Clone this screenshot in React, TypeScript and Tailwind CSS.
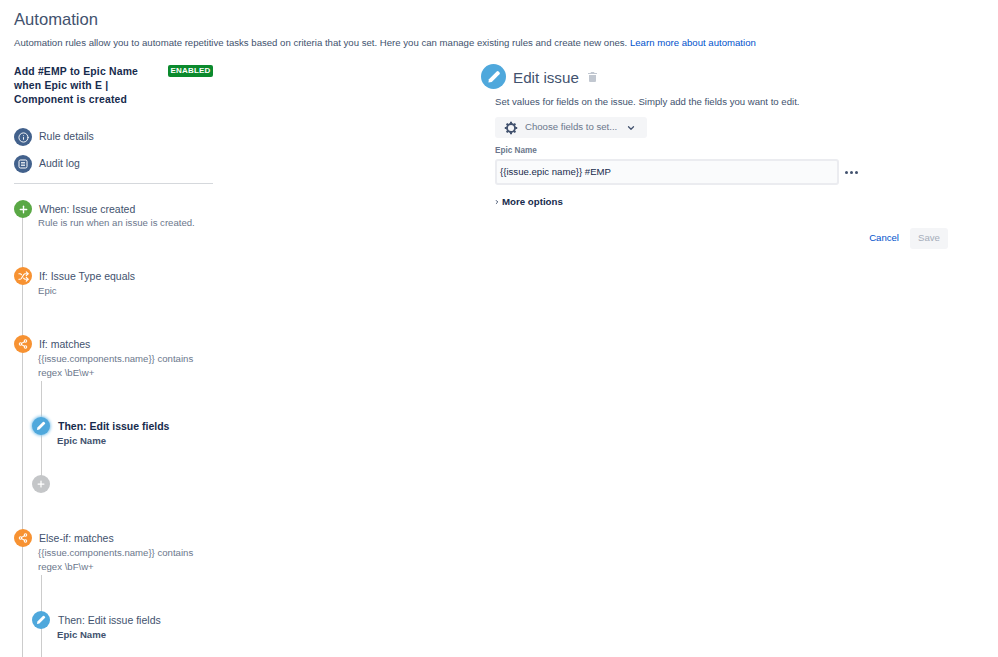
import React from 'react';
import { ChevronDown, ChevronRight, Info, Plus, Share2, Shuffle } from 'lucide-react';

const Pencil = ({ size = 10 }: { size?: number }) => (
  <svg width={size} height={size} viewBox="0 0 10 10" fill="white">
    <path d="M6.9 1.1a1 1 0 0 1 1.4 0l.6.6a1 1 0 0 1 0 1.4L3.4 8.6 1 9l.4-2.4z" />
  </svg>
);

const LogIcon = () => (
  <svg width="10" height="10" viewBox="0 0 10 10" fill="none" stroke="white" strokeWidth="1">
    <rect x="1" y="1" width="8" height="8" rx="1.5" />
    <path d="M3 3.5h4M3 5h4M3 6.5h4" strokeWidth="0.8" />
  </svg>
);

const Gear = () => (
  <svg width="14" height="14" viewBox="0 0 14 14" fill="none" stroke="#42526e">
    <circle cx="7" cy="7" r="4" strokeWidth="1.8" />
    <path d="M7 .8v2M7 11.2v2M.8 7h2M11.2 7h2M2.6 2.6L4 4M10 10l1.4 1.4M11.4 2.6L10 4M4 10l-1.4 1.4" strokeWidth="2" />
  </svg>
);

const Dot = ({ color, size = 'w-[18px] h-[18px]', children }: { color: string; size?: string; children: React.ReactNode }) => (
  <div className={`${size} ${color} relative rounded-full flex items-center justify-center shrink-0`}>
    {children}
  </div>
);

const Title = ({ children, strong }: { children: React.ReactNode; strong?: boolean }) => (
  <p className={`text-[10.5px] leading-[14px] ${strong ? 'font-bold text-[#172b4d]' : 'text-[#42526e]'}`}>{children}</p>
);

const Sub = ({ children, strong }: { children: React.ReactNode; strong?: boolean }) => (
  <p className={`text-[9.6px] leading-[14px] -ml-px ${strong ? 'font-bold text-[#42526e]' : 'text-[#6b778c]'}`}>{children}</p>
);

const MenuRow = ({ icon, label }: { icon: React.ReactNode; label: string }) => (
  <div className="flex items-center gap-[7px] h-[18px]">
    <Dot color="bg-[#42618c]">{icon}</Dot>
    <span className="text-[10.5px] text-[#42526e]">{label}</span>
  </div>
);

const Step = ({ icon, title, lines, className }: { icon: React.ReactNode; title: string; lines: string[]; className: string }) => (
  <div className={`flex gap-[7px] ${className}`}>
    <Dot color="bg-[#f79232]">{icon}</Dot>
    <div className="pt-[2px]">
      <Title>{title}</Title>
      <div className="mt-px">
        {lines.map((l) => <Sub key={l}>{l}</Sub>)}
      </div>
    </div>
  </div>
);

const ThenStep = ({ strong, className }: { strong?: boolean; className: string }) => (
  <div className={`flex gap-[8px] ml-[18px] ${className}`}>
    <Dot color={strong ? 'bg-[#4fa8dc] shadow-[0_0_3px_1px_#8cc8ec]' : 'bg-[#4fa8dc]'}><Pencil /></Dot>
    <div className="pt-[2px]">
      <Title strong={strong}>Then: Edit issue fields</Title>
      <div className="mt-px">
        <Sub strong>Epic Name</Sub>
      </div>
    </div>
  </div>
);

export default function App() {
  return (
    <div className="h-[657px] w-[998px] overflow-hidden bg-white font-['Liberation_Sans',sans-serif]">
      <div className="px-[14px] pt-[11px]">
        <h1 className="text-[16.6px] leading-[18px] text-[#42526e]">Automation</h1>
        <p className="mt-[7px] text-[9.6px] leading-[14px] text-[#42526e]">
          Automation rules allow you to automate repetitive tasks based on criteria that you set. Here you can manage existing rules and create new ones.{' '}
          <span className="text-[#0052cc]">Learn more about automation</span>
        </p>
      </div>

      <div className="flex mt-[15px] pl-[14px]">
        <aside className="w-[199px] shrink-0">
          <div className="flex justify-between items-start">
            <h2 className="text-[10.4px] leading-[14px] font-bold text-[#172b4d] tracking-[0.2px]">
              Add #EMP to Epic Name
              <br />
              when Epic with E |
              <br />
              Component is created
            </h2>
            <span className="h-[12px] w-[45px] text-center rounded-[2px] bg-[#0b8a2d] text-white text-[8px] leading-[12px] font-bold tracking-[0.2px]">ENABLED</span>
          </div>

          <div className="mt-[21px] flex flex-col gap-[9px]">
            <MenuRow icon={<Info size={11} color="white" />} label="Rule details" />
            <MenuRow icon={<LogIcon />} label="Audit log" />
          </div>
          <div className="mt-[10px] border-t border-[#d5d8dc]" />

          <div className="relative mt-[16px]">
            <span className="absolute left-[8px] top-[8px] w-px h-[450px] bg-[#cccccc]" />
            <span className="absolute left-[27px] top-[181px] w-px h-[102px] bg-[#cccccc]" />
            <span className="absolute left-[27px] top-[375px] w-px h-[90px] bg-[#cccccc]" />

            <div className="flex gap-[7px] h-[67px]">
              <Dot color="bg-[#5aa845]"><Plus size={11} color="white" strokeWidth={3} /></Dot>
              <div className="pt-[2px]">
                <Title>When: Issue created</Title>
                <Sub>Rule is run when an issue is created.</Sub>
              </div>
            </div>

            <Step
              className="h-[68px]"
              icon={<Shuffle size={11} color="white" strokeWidth={2.5} />}
              title="If: Issue Type equals"
              lines={['Epic']}
            />
            <Step
              className="h-[82px]"
              icon={<Share2 size={10} color="white" strokeWidth={2.5} />}
              title="If: matches"
              lines={['{{issue.components.name}} contains', 'regex \\bE\\w+']}
            />
            <ThenStep strong className="h-[58px]" />
            <div className="ml-[18px] h-[54px]">
              <Dot color="bg-[#c4c6c8]"><Plus size={10} color="white" strokeWidth={3} /></Dot>
            </div>
            <Step
              className="h-[82px]"
              icon={<Share2 size={10} color="white" strokeWidth={2.5} />}
              title="Else-if: matches"
              lines={['{{issue.components.name}} contains', 'regex \\bF\\w+']}
            />
            <ThenStep className="h-[40px]" />
          </div>
        </aside>

        <main className="ml-[268px] flex-1">
          <div className="flex items-center gap-[7px] h-[25px] -mt-px">
            <Dot color="bg-[#4fa8dc]" size="w-[25px] h-[25px]"><Pencil size={14} /></Dot>
            <span className="text-[15.2px] leading-[20px] pt-[2px] text-[#42526e]">Edit issue</span>
            <svg width="9" height="10" viewBox="0 0 9 10" fill="#c1c7d0" className="ml-[2px]">
              <path d="M3 0h3l.5 1H9v1H0V1h2.5zM1 3h7v6a1 1 0 0 1-1 1H2a1 1 0 0 1-1-1z" />
            </svg>
          </div>

          <div className="ml-[14px] w-[453px]">
            <p className="mt-[6px] text-[9.6px] leading-[14px] text-[#42526e]">
              Set values for fields on the issue. Simply add the fields you want to edit.
            </p>
            <div className="mt-[8px] flex items-center w-[152px] h-[21px] rounded-[3px] bg-[#f4f5f7] pl-[9px]">
              <Gear />
              <span className="ml-[7px] text-[9.6px] text-[#6b778c]">Choose fields to set...</span>
              <ChevronDown size={10} color="#42526e" strokeWidth={3} className="ml-[9px]" />
            </div>
            <p className="mt-[7px] text-[8.2px] leading-[12px] font-bold text-[#6b778c]">Epic Name</p>
            <div className="mt-[2px] flex items-center gap-[6px]">
              <div className="w-[344px] h-[26px] flex items-center rounded-[3px] border-2 border-[#ebecf0] bg-[#fafbfc] pl-[3px] text-[9.6px] text-[#172b4d]">
                {'{{issue.epic name}} #EMP'}
              </div>
              <div className="flex gap-[2px]">
                <span className="w-[3px] h-[3px] rounded-full bg-[#42526e]" />
                <span className="w-[3px] h-[3px] rounded-full bg-[#42526e]" />
                <span className="w-[3px] h-[3px] rounded-full bg-[#42526e]" />
              </div>
            </div>
            <div className="mt-[10px] flex items-center gap-[2px] -ml-px">
              <ChevronRight size={6} color="#42526e" strokeWidth={4} />
              <span className="text-[9.7px] leading-[14px] font-bold text-[#172b4d]">More options</span>
            </div>
            <div className="mt-[19px] flex items-center justify-end gap-[11px]">
              <span className="text-[9.6px] text-[#0052cc]">Cancel</span>
              <span className="w-[38px] h-[21px] flex items-center justify-center rounded-[3px] bg-[#f4f5f7] text-[9.6px] text-[#a5adba]">Save</span>
            </div>
          </div>
        </main>
      </div>
    </div>
  );
}
